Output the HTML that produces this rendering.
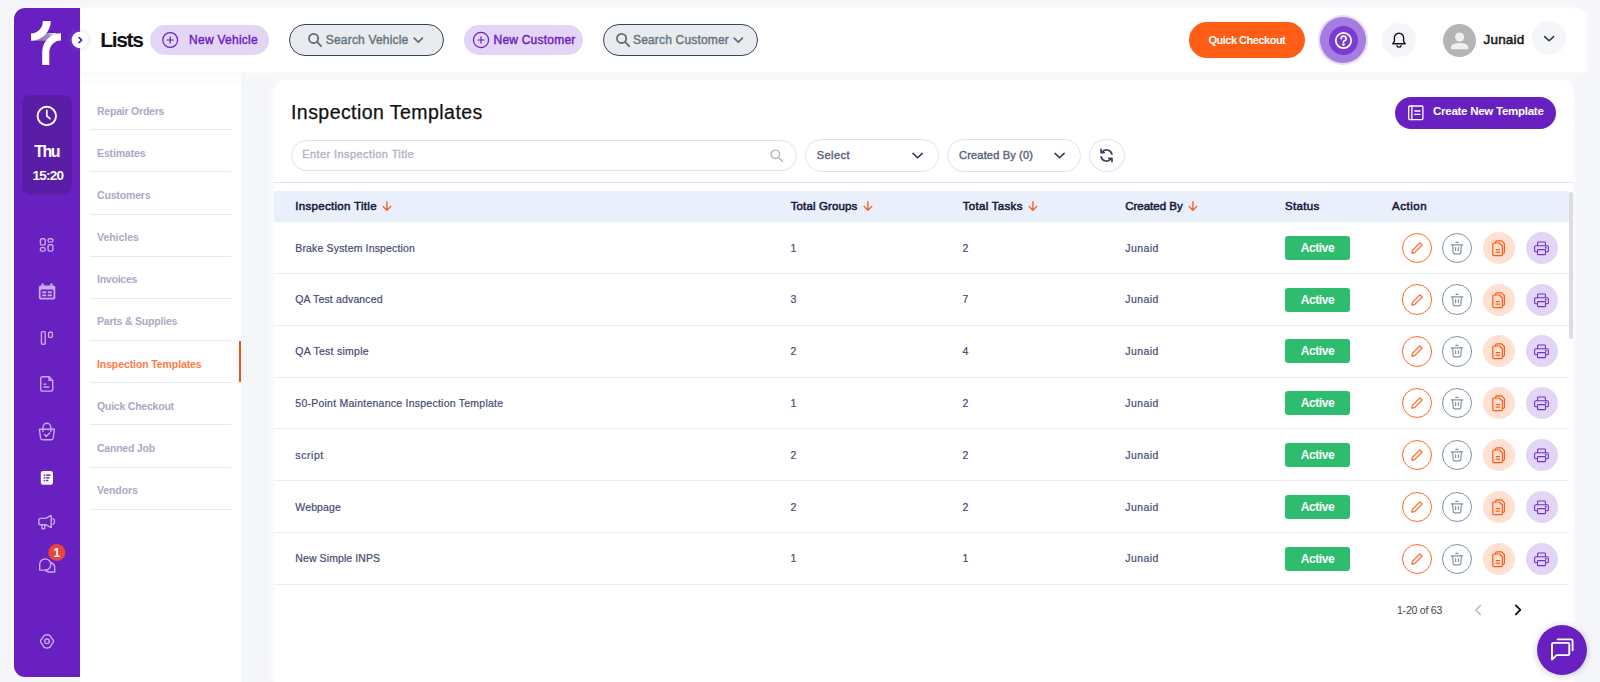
<!DOCTYPE html>
<html><head><meta charset="utf-8">
<style>
*{box-sizing:border-box;margin:0;padding:0}
html,body{width:1600px;height:682px;overflow:hidden;background:#f5f6fa;font-family:"Liberation Sans",sans-serif;}
.abs{position:absolute}
#side{position:absolute;left:14px;top:8px;width:66px;height:669px;background:#6920c1;border-radius:11px 0 0 11px;box-shadow:-1px 0 5px rgba(255,255,255,.8);}
#head{position:absolute;left:80px;top:8px;width:1506.5px;height:64px;background:#fff;border-radius:0 12px 0 0;box-shadow:0 0 8px rgba(255,255,255,.8);}
#nav{position:absolute;left:80px;top:72px;width:161px;height:610px;background:linear-gradient(#f8f9fc,#fff 13px);}
#card{position:absolute;left:274px;top:80px;width:1299px;height:610px;background:#fff;border-radius:12px;box-shadow:0 0 12px rgba(255,255,255,.9);}
.t{position:absolute;white-space:nowrap;line-height:1;}
.navi{position:absolute;left:97px;font-size:10.5px;font-weight:bold;color:#a8aac6;white-space:nowrap;line-height:12px}
.navl{position:absolute;left:90.3px;width:140.5px;height:1px;background:#e6e9f4}
.pill{position:absolute;border-radius:20px}
.hd{position:absolute;top:199.7px;font-size:11.5px;font-weight:normal;-webkit-text-stroke:0.5px #15163a;color:#15163a;white-space:nowrap;line-height:12px}
.cell{position:absolute;font-size:10.5px;color:#454a73;-webkit-text-stroke:0.2px #454a73;white-space:nowrap;line-height:12px}
.rowl{position:absolute;left:274px;width:1295px;height:1px;background:#ebedf3}
.badge{position:absolute;left:1285px;width:65px;height:24px;border-radius:3px;background:#2ebd6e;color:#fff;font-weight:bold;font-size:12px;text-align:center;line-height:25px}
.ic{position:absolute;border-radius:50%}
.md{font-weight:normal !important;-webkit-text-stroke:0.4px currentColor}
</style><style id="fit">
#thu{letter-spacing:-1.514px}
#time{letter-spacing:-0.733px}
#lists{letter-spacing:-1.354px}
#nv{letter-spacing:0.255px}
#sv{letter-spacing:0.188px}
#nc{letter-spacing:0.222px}
#sc{letter-spacing:0.173px}
#qc{letter-spacing:-0.488px}
#jn{letter-spacing:0.201px}
#ttl{letter-spacing:0.445px}
#cnt{letter-spacing:-0.259px}
#ph{letter-spacing:0.417px}
#sel{letter-spacing:0.444px}
#cb0{letter-spacing:0.175px}
#h0{letter-spacing:0.305px}
#h1{letter-spacing:0.127px}
#h2{letter-spacing:0.291px}
#h3{letter-spacing:-0.003px}
#h4{letter-spacing:0.338px}
#h5{letter-spacing:0.506px}
#r0a{letter-spacing:0.157px}
#r1a{letter-spacing:0.151px}
#r2a{letter-spacing:0.266px}
#r3a{letter-spacing:0.244px}
#r4a{letter-spacing:0.581px}
#r5a{letter-spacing:0.139px}
#r6a{letter-spacing:0.096px}
#pg{letter-spacing:-0.222px}
#n0{letter-spacing:-0.219px}
#n1{letter-spacing:-0.126px}
#n2{letter-spacing:-0.157px}
#n3{letter-spacing:-0.019px}
#n4{letter-spacing:-0.233px}
#n5{letter-spacing:-0.204px}
#n6{letter-spacing:-0.100px}
#n7{letter-spacing:-0.218px}
#n8{letter-spacing:-0.222px}
#n9{letter-spacing:-0.106px}
#r0j{letter-spacing:0.449px}
#b0{letter-spacing:-0.446px}
#r1j{letter-spacing:0.449px}
#b1{letter-spacing:-0.446px}
#r2j{letter-spacing:0.449px}
#b2{letter-spacing:-0.446px}
#r3j{letter-spacing:0.449px}
#b3{letter-spacing:-0.446px}
#r4j{letter-spacing:0.449px}
#b4{letter-spacing:-0.446px}
#r5j{letter-spacing:0.449px}
#b5{letter-spacing:-0.446px}
#r6j{letter-spacing:0.449px}
#b6{letter-spacing:-0.446px}
</style></head><body>
<div id="head"></div>
<div id="nav"></div>
<div id="card"></div>
<div id="side"></div>
<!--SIDE-->
<svg class="abs" style="left:14px;top:8px" width="80" height="669" viewBox="14 8 80 669" fill="none">
 <!-- logo -->
 <defs><linearGradient id="lg" x1="38" y1="41" x2="53" y2="33" gradientUnits="userSpaceOnUse"><stop offset="0" stop-color="#8e79b3"/><stop offset=".7" stop-color="#a08fc0"/><stop offset="1" stop-color="#efeaf6"/></linearGradient></defs>
 <path d="M33.8 40.8 L46.5 40.8 L57 32.9 L47 32.9 Z" fill="url(#lg)"/>
 <path d="M42.8 21 L50.8 21 A19.8 19.8 0 0 1 31 40.7 L31 33.3 A11.8 11.8 0 0 0 42.8 21 Z" fill="#fff"/>
 <path d="M61 33.2 L61 40.6 A11.7 11.7 0 0 0 49.3 52.3 L49.3 65 L42.2 65 L42.2 52 A18.8 18.8 0 0 1 61 33.2 Z" fill="#fff"/>
 
 <!-- clock box -->
 <rect x="22" y="95" width="50" height="99.5" rx="8" fill="#5a1ea6"/>
 <circle cx="46.8" cy="116" r="9.2" stroke="#fff" stroke-width="1.9"/>
 <path d="M46.8 110.3 V116 L50 118.6" stroke="#fff" stroke-width="1.7" stroke-linecap="round" stroke-linejoin="round"/>
 <g stroke="#c9aaf0" stroke-width="1.4" stroke-linejoin="round" stroke-linecap="round">
  <!-- grid -->
  <rect x="40.4" y="238.7" width="4.8" height="6.4" rx="1.3"/>
  <rect x="48.1" y="238.7" width="4.8" height="3.4" rx="1.3"/>
  <rect x="40.4" y="247.6" width="4.8" height="3.5" rx="1.3"/>
  <rect x="48.1" y="244.8" width="4.8" height="6.3" rx="1.3"/>
  <!-- kanban -->
  <rect x="41.4" y="331.6" width="3.8" height="12.6" rx="1"/>
  <rect x="48.6" y="332.2" width="3.8" height="5.2" rx="1"/>
  <!-- doc -->
  <path d="M42.6 376.7 H49 L52.7 380.4 V389.2 Q52.7 391.1 50.8 391.1 H42.6 Q40.7 391.1 40.7 389.2 V378.6 Q40.7 376.7 42.6 376.7 Z"/>
  <path d="M49 376.9 V380.4 H52.5" />
  <path d="M43.8 384.1 H46.2 M43.8 387 H48.8"/>
  <!-- bag -->
  <path d="M39.4 429.3 H54.4 L53.2 438 Q53 439.8 51.2 439.8 H42.6 Q40.8 439.8 40.6 438 Z"/>
  <path d="M43 431.5 V427.2 A3.9 3.9 0 0 1 50.8 427.2 V431.5"/>
  <path d="M44.5 434.6 L46.3 436.4 L49.6 433"/>
  <!-- megaphone -->
  <path d="M40.6 518.4 H45.6 L51.2 515.4 V527.6 L45.6 524.7 H40.6 Q38.8 524.7 38.8 522.9 V520.2 Q38.8 518.4 40.6 518.4 Z"/>
  <path d="M42 524.9 V528 Q42 528.8 42.8 528.8 H44 Q44.8 528.8 44.8 528 V524.9"/>
  <path d="M53 518.7 A3.4 3.4 0 0 1 53 524.4"/>
  <!-- chat -->
  <path d="M45.2 558.9 A5.6 5.6 0 0 1 50.8 564.5 A5.6 5.6 0 0 1 45.2 570.1 H39.7 V564.5 A5.6 5.6 0 0 1 45.2 558.9 Z"/>
  <path d="M51.6 562.8 A5 5 0 0 1 54.7 567.4 V572 H49.6 A5 5 0 0 1 45.4 570.3"/>
  <!-- gear -->
  <path d="M44.2 635.3 Q47 634.1 49.8 635.3 Q51.2 637.8 53.3 640.2 Q53.6 641.3 53.3 642.4 Q51.2 644.9 49.8 647.4 Q47 648.5 44.2 647.4 Q42.8 644.9 40.7 642.4 Q40.4 641.3 40.7 640.2 Q42.8 637.8 44.2 635.3 Z"/>
  <circle cx="47" cy="641.3" r="2.3"/>
 </g>
 <!-- calendar filled -->
 <path d="M41 285.4 H53.1 Q55.3 285.4 55.3 287.6 V297.4 Q55.3 299.6 53.1 299.6 H41 Q38.8 299.6 38.8 297.4 V287.6 Q38.8 285.4 41 285.4 Z" fill="#c9aaf0"/>
 <rect x="41.6" y="283.2" width="2" height="4" rx="1" fill="#c9aaf0"/>
 <rect x="50.5" y="283.2" width="2" height="4" rx="1" fill="#c9aaf0"/>
 <rect x="40.6" y="289.6" width="12.9" height="8.2" rx="1" fill="#6920c1"/>
 <rect x="42.3" y="291.3" width="4" height="1.9" fill="#c9aaf0"/><rect x="47.8" y="291.3" width="4" height="1.9" fill="#c9aaf0"/>
 <rect x="42.3" y="294.4" width="4" height="1.9" fill="#c9aaf0"/><rect x="47.8" y="294.4" width="4" height="1.9" fill="#c9aaf0"/>
 <!-- list filled -->
 <rect x="40.8" y="471" width="12.2" height="13.8" rx="2.2" fill="#fff"/>
 <g fill="#6920c1"><rect x="43.7" y="474.4" width="1.5" height="1.5"/><rect x="46.2" y="474.4" width="4.2" height="1.5"/>
 <rect x="43.7" y="477.1" width="1.5" height="1.5"/><rect x="46.2" y="477.1" width="3.2" height="1.5"/>
 <rect x="43.7" y="479.8" width="1.5" height="1.5"/><rect x="46.2" y="479.8" width="2.2" height="1.5"/></g>
 <!-- badge -->
 <circle cx="56.8" cy="552.6" r="8.5" fill="#e8453c"/>
 <!-- toggle -->
 <circle cx="79.8" cy="40" r="8.2" fill="#fff" style="filter:drop-shadow(0 0 3px rgba(160,160,190,.35))"/>
 <path d="M79 37.6 L81.7 40.1 L79 42.6" stroke="#6920c1" stroke-width="1.7" stroke-linecap="round" stroke-linejoin="round"/>
</svg>
<div class="t" id="thu" style="left:34.3px;top:143.8px;font-size:16px;font-weight:bold;color:#fff;">Thu</div>
<div class="t" id="time" style="left:32.5px;top:169px;font-size:13.5px;font-weight:bold;color:#fff;">15:20</div>
<div class="t" id="bdg" style="left:53.4px;top:546.5px;font-size:12px;font-weight:bold;color:#fff;">1</div>
<!--/SIDE-->
<!--HEAD-->
<div class="t" id="lists" style="left:100.3px;top:28.5px;font-size:21px;font-weight:bold;color:#111;">Lists</div>
<div class="pill" style="left:149.5px;top:25px;width:119.5px;height:30px;background:#e3d5f6"></div>
<svg class="abs" style="left:161px;top:31px" width="18" height="18" viewBox="0 0 18 18" fill="none" stroke="#6920c1" stroke-width="1.2" stroke-linecap="round"><circle cx="9.2" cy="9" r="7.4"/><path d="M9.2 5.9 V12.1 M6.1 9 H12.3"/></svg>
<div class="t md" id="nv" style="left:189.1px;top:33.5px;font-size:12px;font-weight:bold;color:#6920c1;">New Vehicle</div>

<div class="pill" style="left:289px;top:24px;width:155px;height:32px;background:#e9ecef;border:1px solid #3d405e"></div>
<svg class="abs" style="left:307px;top:32px" width="16" height="16" viewBox="0 0 16 16" fill="none" stroke="#5f6b76" stroke-width="1.8" stroke-linecap="round"><circle cx="6.6" cy="6.4" r="4.6"/><path d="M10.2 10.1 L14.2 14.2"/></svg>
<div class="t md" id="sv" style="left:325.8px;top:33.5px;font-size:12px;font-weight:bold;color:#66737f;">Search Vehicle</div>
<svg class="abs" style="left:412px;top:35px" width="12" height="10" viewBox="0 0 12 10" fill="none" stroke="#5f6b76" stroke-width="1.8" stroke-linecap="round" stroke-linejoin="round"><path d="M2.2 3.2 L6.3 7.2 L10.4 3.2"/></svg>

<div class="pill" style="left:463.5px;top:25px;width:119.5px;height:30px;background:#e3d5f6"></div>
<svg class="abs" style="left:472px;top:31px" width="18" height="18" viewBox="0 0 18 18" fill="none" stroke="#6920c1" stroke-width="1.2" stroke-linecap="round"><circle cx="9" cy="9" r="7.6"/><path d="M9 5.9 V12.1 M5.9 9 H12.1"/></svg>
<div class="t md" id="nc" style="left:493.5px;top:33.5px;font-size:12px;font-weight:bold;color:#6920c1;">New Customer</div>

<div class="pill" style="left:603px;top:24px;width:155px;height:32px;background:#e9ecef;border:1px solid #3d405e"></div>
<svg class="abs" style="left:615px;top:32px" width="16" height="16" viewBox="0 0 16 16" fill="none" stroke="#5f6b76" stroke-width="1.8" stroke-linecap="round"><circle cx="6.6" cy="6.4" r="4.6"/><path d="M10.2 10.1 L14.2 14.2"/></svg>
<div class="t md" id="sc" style="left:633px;top:33.5px;font-size:12px;font-weight:bold;color:#66737f;">Search Customer</div>
<svg class="abs" style="left:732px;top:35px" width="12" height="10" viewBox="0 0 12 10" fill="none" stroke="#5f6b76" stroke-width="1.8" stroke-linecap="round" stroke-linejoin="round"><path d="M2.2 3.2 L6.3 7.2 L10.4 3.2"/></svg>

<div class="pill" style="left:1188.5px;top:22px;width:116px;height:36px;background:#ff5c16"></div>
<div class="t" id="qc" style="left:1208.4px;top:34.5px;font-size:11px;font-weight:bold;color:#fff;">Quick Checkout</div>

<div class="ic" style="left:1320.3px;top:17px;width:46px;height:46px;background:#a67ce0;box-shadow:0 0 1px 2px rgba(166,124,224,.3)"></div>
<div class="ic" style="left:1328.8px;top:25.5px;width:29px;height:29px;background:#7a3bd0"></div>
<svg class="abs" style="left:1333.8px;top:30.6px" width="19" height="19" viewBox="0 0 19 19" fill="none" stroke="#fff" stroke-width="1.7" stroke-linecap="round"><circle cx="9.5" cy="9.5" r="7.7"/><path d="M7.2 7.6 A2.4 2.4 0 1 1 9.9 10 Q9.5 10.2 9.5 11.2"/><circle cx="9.5" cy="13.6" r=".5" fill="#fff"/></svg>

<div class="ic" style="left:1382.3px;top:23.3px;width:33.4px;height:33.4px;background:#f5f6fa"></div>
<svg class="abs" style="left:1390px;top:31px" width="18" height="18" viewBox="0 0 18 18" fill="none" stroke="#151515" stroke-width="1.4" stroke-linecap="round" stroke-linejoin="round"><path d="M9 2.2 A4.6 4.6 0 0 1 13.6 6.8 V10.3 L15.2 12.7 H2.8 L4.4 10.3 V6.8 A4.6 4.6 0 0 1 9 2.2 Z"/><path d="M7 14.7 A2.1 2.1 0 0 0 11 14.7"/></svg>

<div class="ic" style="left:1442.8px;top:23.5px;width:33px;height:33px;background:#b4b4b4;overflow:hidden">
 <svg width="33" height="33" viewBox="0 0 33 33"><circle cx="16.6" cy="13.1" r="4.6" fill="#efefef"/><path d="M8 25.3 V23.6 Q8 19.1 16.6 19.1 Q25.3 19.1 25.3 23.6 V25.3 Z" fill="#efefef"/></svg></div>
<div class="t" id="jn" style="left:1483.5px;top:33px;font-size:13.5px;font-weight:normal;-webkit-text-stroke:0.55px #1d1d1d;color:#1d1d1d;">Junaid</div>
<div class="ic" style="left:1532.2px;top:21px;width:34px;height:34px;background:#f5f6fa"></div>
<svg class="abs" style="left:1543px;top:33.7px" width="12" height="10" viewBox="0 0 12 10" fill="none" stroke="#27324a" stroke-width="1.5" stroke-linecap="round" stroke-linejoin="round"><path d="M1.6 2.6 L6.1 6.8 L10.6 2.6"/></svg>
<!--/HEAD-->
<!--NAV--><div class="navi" id="n0" style="top:104.60px;color:#a8aac6">Repair Orders</div>
<div class="navl" style="top:129.30px"></div>
<div class="navi" id="n1" style="top:146.75px;color:#a8aac6">Estimates</div>
<div class="navl" style="top:171.45px"></div>
<div class="navi" id="n2" style="top:188.90px;color:#a8aac6">Customers</div>
<div class="navl" style="top:213.60px"></div>
<div class="navi" id="n3" style="top:231.05px;color:#a8aac6">Vehicles</div>
<div class="navl" style="top:255.75px"></div>
<div class="navi" id="n4" style="top:273.20px;color:#a8aac6">Invoices</div>
<div class="navl" style="top:297.90px"></div>
<div class="navi" id="n5" style="top:315.35px;color:#a8aac6">Parts & Supplies</div>
<div class="navl" style="top:340.05px"></div>
<div class="navi" id="n6" style="top:357.50px;color:#ff7b45">Inspection Templates</div>
<div class="navl" style="top:382.20px"></div>
<div class="navi" id="n7" style="top:399.65px;color:#a8aac6">Quick Checkout</div>
<div class="navl" style="top:424.35px"></div>
<div class="navi" id="n8" style="top:441.80px;color:#a8aac6">Canned Job</div>
<div class="navl" style="top:466.50px"></div>
<div class="navi" id="n9" style="top:483.95px;color:#a8aac6">Vendors</div>
<div class="navl" style="top:508.65px"></div>
<div class="abs" style="left:239px;top:340.8px;width:2px;height:41.6px;background:#f4511e"></div>
<!--/NAV-->
<!--CARD-->
<div class="t" id="ttl" style="left:291px;top:103.2px;font-size:19.5px;color:#111;-webkit-text-stroke:0.25px #111;">Inspection Templates</div>
<div class="pill" style="left:1395px;top:97px;width:161.3px;height:31.5px;background:#6920c1"></div>
<svg class="abs" style="left:1407px;top:104px" width="18" height="18" viewBox="0 0 18 18" fill="none" stroke="#fff" stroke-width="1.3" stroke-linejoin="round" stroke-linecap="round"><rect x="1.7" y="2" width="14.2" height="13.6" rx="1"/><path d="M4.9 2 V15.6 M7.8 7 H13 M7.8 10.3 H13"/></svg>
<div class="t" id="cnt" style="left:1433px;top:106.2px;font-size:11.5px;font-weight:bold;color:#fff;">Create New Template</div>

<div class="pill" style="left:291px;top:139.5px;width:505.5px;height:31.5px;border:1px solid #d9e4f7;background:#fff"></div>
<div class="t md" id="ph" style="left:302.2px;top:149px;font-size:11px;font-weight:bold;color:#b3b6c6;">Enter Inspection Title</div>
<svg class="abs" style="left:769px;top:148px" width="16" height="16" viewBox="0 0 16 16" fill="none" stroke="#b5b5b8" stroke-width="1.4" stroke-linecap="round"><circle cx="6.3" cy="6.3" r="4.2"/><path d="M9.5 9.5 L13.6 13.6"/></svg>

<div class="pill" style="left:805.2px;top:139px;width:133.5px;height:33.3px;border:1px solid #d9e4f7;background:#fff"></div>
<div class="t md" id="sel" style="left:816.7px;top:149.5px;font-size:11px;font-weight:bold;color:#5a5f7d;">Select</div>
<svg class="abs" style="left:911px;top:150px" width="13" height="11" viewBox="0 0 13 11" fill="none" stroke="#2b3350" stroke-width="1.5" stroke-linecap="round" stroke-linejoin="round"><path d="M2 3.4 L6.6 7.8 L11.2 3.4"/></svg>

<div class="pill" style="left:947.2px;top:139px;width:133.5px;height:33.3px;border:1px solid #d9e4f7;background:#fff"></div>
<div class="t md" id="cb0" style="left:959.1px;top:149.5px;font-size:11px;font-weight:bold;color:#5a5f7d;">Created By (0)</div>
<svg class="abs" style="left:1053px;top:150px" width="13" height="11" viewBox="0 0 13 11" fill="none" stroke="#2b3350" stroke-width="1.5" stroke-linecap="round" stroke-linejoin="round"><path d="M2 3.4 L6.6 7.8 L11.2 3.4"/></svg>

<div class="ic" style="left:1089px;top:139px;width:35.6px;height:33.3px;border:1px solid #d9e4f7;background:#fff"></div>
<svg class="abs" style="left:1098.4px;top:146.9px" width="17" height="17" viewBox="0 0 17 17" fill="none" stroke="#3a4162" stroke-width="1.7" stroke-linecap="round" stroke-linejoin="round"><path d="M13.9 7.2 A5.6 5.6 0 0 0 3.9 5.2 M3 2.4 V5.6 H6.2"/><path d="M3.1 9.8 A5.6 5.6 0 0 0 13.1 11.8 M14 14.6 V11.4 H10.8"/></svg>

<div class="abs" style="left:274px;top:182.3px;width:1299px;height:1px;background:#dbe6f6"></div>
<div class="abs" style="left:274px;top:191px;width:1295px;height:31px;background:#e9f0fc"></div>
<div class="abs" style="left:1569px;top:192.3px;width:4px;height:146.5px;background:#dddddd;border-radius:2px"></div>
<div class="hd" id="h0" style="left:295.3px">Inspection Title</div>
<svg class="abs" style="left:381px;top:200.3px" width="12" height="12" viewBox="0 0 12 12" fill="none" stroke="#ff5a10" stroke-width="1.3" stroke-linecap="round" stroke-linejoin="round"><path d="M5.9 1.6 V10.2 M2 6.4 L5.9 10.3 L9.8 6.4"/></svg>
<div class="hd" id="h1" style="left:790.7px">Total Groups</div>
<svg class="abs" style="left:862.3px;top:200.3px" width="12" height="12" viewBox="0 0 12 12" fill="none" stroke="#ff5a10" stroke-width="1.3" stroke-linecap="round" stroke-linejoin="round"><path d="M5.9 1.6 V10.2 M2 6.4 L5.9 10.3 L9.8 6.4"/></svg>
<div class="hd" id="h2" style="left:962.8px">Total Tasks</div>
<svg class="abs" style="left:1026.8px;top:200.3px" width="12" height="12" viewBox="0 0 12 12" fill="none" stroke="#ff5a10" stroke-width="1.3" stroke-linecap="round" stroke-linejoin="round"><path d="M5.9 1.6 V10.2 M2 6.4 L5.9 10.3 L9.8 6.4"/></svg>
<div class="hd" id="h3" style="left:1125.2px">Created By</div>
<svg class="abs" style="left:1187.2px;top:200.3px" width="12" height="12" viewBox="0 0 12 12" fill="none" stroke="#ff5a10" stroke-width="1.3" stroke-linecap="round" stroke-linejoin="round"><path d="M5.9 1.6 V10.2 M2 6.4 L5.9 10.3 L9.8 6.4"/></svg>
<div class="hd" id="h4" style="left:1285px">Status</div>
<div class="hd" id="h5" style="left:1392.1px">Action</div>
<div class="cell" id="r0a" style="left:295.3px;top:242px">Brake System Inspection</div><div class="cell" style="left:790.5px;top:242px">1</div><div class="cell" style="left:962.5px;top:242px">2</div><div class="cell" id="r0j" style="left:1125.2px;top:242px">Junaid</div><div class="badge" style="top:235.7px"><span id="b0">Active</span></div>
<div class="ic" style="left:1401.8px;top:232.5px;width:30.4px;height:30.4px;border:1px solid #ff6a2b"></div><div class="ic" style="left:1442px;top:232.5px;width:30.4px;height:30.4px;border:1px solid #8492a6"></div><div class="ic" style="left:1482.8px;top:231.7px;width:32px;height:32px;background:#ffe0d3"></div><div class="ic" style="left:1525.6px;top:231.7px;width:32px;height:32px;background:#e2d5f5"></div>
<svg class="abs" style="left:1409px;top:239.7px" width="16" height="16" viewBox="0 0 16 16" fill="none" stroke="#ff5a10" stroke-width="1.1" stroke-linejoin="round"><path d="M10.9 2.9 L13.1 5.1 L5.6 12.6 L2.9 13.1 L3.4 10.4 Z"/></svg><svg class="abs" style="left:1449px;top:239.7px" width="16" height="16" viewBox="0 0 16 16" fill="none" stroke="#8492a6" stroke-width="1.2" stroke-linecap="round" stroke-linejoin="round"><path d="M2.2 4.9 H13.8 M6.8 2.3 H9.2 M3.6 5 L4.2 12.4 Q4.3 13.8 5.7 13.8 H10.3 Q11.7 13.8 11.8 12.4 L12.4 5 M6.6 7.6 V10.6 M9.4 7.6 V10.6"/></svg><svg class="abs" style="left:1490px;top:238.7px" width="18" height="18" viewBox="0 0 18 18" fill="none" stroke="#ff5a10" stroke-width="1.2" stroke-linecap="round" stroke-linejoin="round"><path d="M5.6 3.8 V3 Q5.6 1.8 6.8 1.8 H11.6 L14.4 4.6 V13.2 Q14.4 14.4 13.2 14.4 H12.6"/><path d="M4 4 H9.4 L12.4 7 V15.4 Q12.4 16.6 11.2 16.6 H4 Q2.8 16.6 2.8 15.4 V5.2 Q2.8 4 4 4 Z"/><path d="M6.2 10.6 H9.6 M6.2 13.2 H9.6"/></svg><svg class="abs" style="left:1533px;top:239.7px" width="17" height="17" viewBox="0 0 17 17" fill="none" stroke="#6f33c8" stroke-width="1.1" stroke-linecap="round" stroke-linejoin="round"><path d="M4.6 5.6 V2.7 Q4.6 2 5.3 2 H11.7 Q12.4 2 12.4 2.7 V5.6"/><path d="M4.4 11.8 H2.9 Q1.6 11.8 1.6 10.5 V7 Q1.6 5.7 2.9 5.7 H14.1 Q15.4 5.7 15.4 7 V10.5 Q15.4 11.8 14.1 11.8 H12.6"/><rect x="4.5" y="9.6" width="8" height="5" rx=".6"/><circle cx="12.8" cy="7.8" r=".4" fill="#6b2cc4"/></svg>
<div class="rowl" style="top:272.80px"></div>
<div class="cell" id="r1a" style="left:295.3px;top:293px">QA Test advanced</div><div class="cell" style="left:790.5px;top:293px">3</div><div class="cell" style="left:962.5px;top:293px">7</div><div class="cell" id="r1j" style="left:1125.2px;top:293px">Junaid</div><div class="badge" style="top:287.6px"><span id="b1">Active</span></div>
<div class="ic" style="left:1401.8px;top:284.4px;width:30.4px;height:30.4px;border:1px solid #ff6a2b"></div><div class="ic" style="left:1442px;top:284.4px;width:30.4px;height:30.4px;border:1px solid #8492a6"></div><div class="ic" style="left:1482.8px;top:283.6px;width:32px;height:32px;background:#ffe0d3"></div><div class="ic" style="left:1525.6px;top:283.6px;width:32px;height:32px;background:#e2d5f5"></div>
<svg class="abs" style="left:1409px;top:291.6px" width="16" height="16" viewBox="0 0 16 16" fill="none" stroke="#ff5a10" stroke-width="1.1" stroke-linejoin="round"><path d="M10.9 2.9 L13.1 5.1 L5.6 12.6 L2.9 13.1 L3.4 10.4 Z"/></svg><svg class="abs" style="left:1449px;top:291.6px" width="16" height="16" viewBox="0 0 16 16" fill="none" stroke="#8492a6" stroke-width="1.2" stroke-linecap="round" stroke-linejoin="round"><path d="M2.2 4.9 H13.8 M6.8 2.3 H9.2 M3.6 5 L4.2 12.4 Q4.3 13.8 5.7 13.8 H10.3 Q11.7 13.8 11.8 12.4 L12.4 5 M6.6 7.6 V10.6 M9.4 7.6 V10.6"/></svg><svg class="abs" style="left:1490px;top:290.6px" width="18" height="18" viewBox="0 0 18 18" fill="none" stroke="#ff5a10" stroke-width="1.2" stroke-linecap="round" stroke-linejoin="round"><path d="M5.6 3.8 V3 Q5.6 1.8 6.8 1.8 H11.6 L14.4 4.6 V13.2 Q14.4 14.4 13.2 14.4 H12.6"/><path d="M4 4 H9.4 L12.4 7 V15.4 Q12.4 16.6 11.2 16.6 H4 Q2.8 16.6 2.8 15.4 V5.2 Q2.8 4 4 4 Z"/><path d="M6.2 10.6 H9.6 M6.2 13.2 H9.6"/></svg><svg class="abs" style="left:1533px;top:291.6px" width="17" height="17" viewBox="0 0 17 17" fill="none" stroke="#6f33c8" stroke-width="1.1" stroke-linecap="round" stroke-linejoin="round"><path d="M4.6 5.6 V2.7 Q4.6 2 5.3 2 H11.7 Q12.4 2 12.4 2.7 V5.6"/><path d="M4.4 11.8 H2.9 Q1.6 11.8 1.6 10.5 V7 Q1.6 5.7 2.9 5.7 H14.1 Q15.4 5.7 15.4 7 V10.5 Q15.4 11.8 14.1 11.8 H12.6"/><rect x="4.5" y="9.6" width="8" height="5" rx=".6"/><circle cx="12.8" cy="7.8" r=".4" fill="#6b2cc4"/></svg>
<div class="rowl" style="top:324.66px"></div>
<div class="cell" id="r2a" style="left:295.3px;top:345px">QA Test simple</div><div class="cell" style="left:790.5px;top:345px">2</div><div class="cell" style="left:962.5px;top:345px">4</div><div class="cell" id="r2j" style="left:1125.2px;top:345px">Junaid</div><div class="badge" style="top:339.4px"><span id="b2">Active</span></div>
<div class="ic" style="left:1401.8px;top:336.2px;width:30.4px;height:30.4px;border:1px solid #ff6a2b"></div><div class="ic" style="left:1442px;top:336.2px;width:30.4px;height:30.4px;border:1px solid #8492a6"></div><div class="ic" style="left:1482.8px;top:335.4px;width:32px;height:32px;background:#ffe0d3"></div><div class="ic" style="left:1525.6px;top:335.4px;width:32px;height:32px;background:#e2d5f5"></div>
<svg class="abs" style="left:1409px;top:343.4px" width="16" height="16" viewBox="0 0 16 16" fill="none" stroke="#ff5a10" stroke-width="1.1" stroke-linejoin="round"><path d="M10.9 2.9 L13.1 5.1 L5.6 12.6 L2.9 13.1 L3.4 10.4 Z"/></svg><svg class="abs" style="left:1449px;top:343.4px" width="16" height="16" viewBox="0 0 16 16" fill="none" stroke="#8492a6" stroke-width="1.2" stroke-linecap="round" stroke-linejoin="round"><path d="M2.2 4.9 H13.8 M6.8 2.3 H9.2 M3.6 5 L4.2 12.4 Q4.3 13.8 5.7 13.8 H10.3 Q11.7 13.8 11.8 12.4 L12.4 5 M6.6 7.6 V10.6 M9.4 7.6 V10.6"/></svg><svg class="abs" style="left:1490px;top:342.4px" width="18" height="18" viewBox="0 0 18 18" fill="none" stroke="#ff5a10" stroke-width="1.2" stroke-linecap="round" stroke-linejoin="round"><path d="M5.6 3.8 V3 Q5.6 1.8 6.8 1.8 H11.6 L14.4 4.6 V13.2 Q14.4 14.4 13.2 14.4 H12.6"/><path d="M4 4 H9.4 L12.4 7 V15.4 Q12.4 16.6 11.2 16.6 H4 Q2.8 16.6 2.8 15.4 V5.2 Q2.8 4 4 4 Z"/><path d="M6.2 10.6 H9.6 M6.2 13.2 H9.6"/></svg><svg class="abs" style="left:1533px;top:343.4px" width="17" height="17" viewBox="0 0 17 17" fill="none" stroke="#6f33c8" stroke-width="1.1" stroke-linecap="round" stroke-linejoin="round"><path d="M4.6 5.6 V2.7 Q4.6 2 5.3 2 H11.7 Q12.4 2 12.4 2.7 V5.6"/><path d="M4.4 11.8 H2.9 Q1.6 11.8 1.6 10.5 V7 Q1.6 5.7 2.9 5.7 H14.1 Q15.4 5.7 15.4 7 V10.5 Q15.4 11.8 14.1 11.8 H12.6"/><rect x="4.5" y="9.6" width="8" height="5" rx=".6"/><circle cx="12.8" cy="7.8" r=".4" fill="#6b2cc4"/></svg>
<div class="rowl" style="top:376.52px"></div>
<div class="cell" id="r3a" style="left:295.3px;top:397px">50-Point Maintenance Inspection Template</div><div class="cell" style="left:790.5px;top:397px">1</div><div class="cell" style="left:962.5px;top:397px">2</div><div class="cell" id="r3j" style="left:1125.2px;top:397px">Junaid</div><div class="badge" style="top:391.2px"><span id="b3">Active</span></div>
<div class="ic" style="left:1401.8px;top:388.1px;width:30.4px;height:30.4px;border:1px solid #ff6a2b"></div><div class="ic" style="left:1442px;top:388.1px;width:30.4px;height:30.4px;border:1px solid #8492a6"></div><div class="ic" style="left:1482.8px;top:387.2px;width:32px;height:32px;background:#ffe0d3"></div><div class="ic" style="left:1525.6px;top:387.2px;width:32px;height:32px;background:#e2d5f5"></div>
<svg class="abs" style="left:1409px;top:395.2px" width="16" height="16" viewBox="0 0 16 16" fill="none" stroke="#ff5a10" stroke-width="1.1" stroke-linejoin="round"><path d="M10.9 2.9 L13.1 5.1 L5.6 12.6 L2.9 13.1 L3.4 10.4 Z"/></svg><svg class="abs" style="left:1449px;top:395.2px" width="16" height="16" viewBox="0 0 16 16" fill="none" stroke="#8492a6" stroke-width="1.2" stroke-linecap="round" stroke-linejoin="round"><path d="M2.2 4.9 H13.8 M6.8 2.3 H9.2 M3.6 5 L4.2 12.4 Q4.3 13.8 5.7 13.8 H10.3 Q11.7 13.8 11.8 12.4 L12.4 5 M6.6 7.6 V10.6 M9.4 7.6 V10.6"/></svg><svg class="abs" style="left:1490px;top:394.2px" width="18" height="18" viewBox="0 0 18 18" fill="none" stroke="#ff5a10" stroke-width="1.2" stroke-linecap="round" stroke-linejoin="round"><path d="M5.6 3.8 V3 Q5.6 1.8 6.8 1.8 H11.6 L14.4 4.6 V13.2 Q14.4 14.4 13.2 14.4 H12.6"/><path d="M4 4 H9.4 L12.4 7 V15.4 Q12.4 16.6 11.2 16.6 H4 Q2.8 16.6 2.8 15.4 V5.2 Q2.8 4 4 4 Z"/><path d="M6.2 10.6 H9.6 M6.2 13.2 H9.6"/></svg><svg class="abs" style="left:1533px;top:395.3px" width="17" height="17" viewBox="0 0 17 17" fill="none" stroke="#6f33c8" stroke-width="1.1" stroke-linecap="round" stroke-linejoin="round"><path d="M4.6 5.6 V2.7 Q4.6 2 5.3 2 H11.7 Q12.4 2 12.4 2.7 V5.6"/><path d="M4.4 11.8 H2.9 Q1.6 11.8 1.6 10.5 V7 Q1.6 5.7 2.9 5.7 H14.1 Q15.4 5.7 15.4 7 V10.5 Q15.4 11.8 14.1 11.8 H12.6"/><rect x="4.5" y="9.6" width="8" height="5" rx=".6"/><circle cx="12.8" cy="7.8" r=".4" fill="#6b2cc4"/></svg>
<div class="rowl" style="top:428.38px"></div>
<div class="cell" id="r4a" style="left:295.3px;top:449px">script</div><div class="cell" style="left:790.5px;top:449px">2</div><div class="cell" style="left:962.5px;top:449px">2</div><div class="cell" id="r4j" style="left:1125.2px;top:449px">Junaid</div><div class="badge" style="top:443.1px"><span id="b4">Active</span></div>
<div class="ic" style="left:1401.8px;top:439.9px;width:30.4px;height:30.4px;border:1px solid #ff6a2b"></div><div class="ic" style="left:1442px;top:439.9px;width:30.4px;height:30.4px;border:1px solid #8492a6"></div><div class="ic" style="left:1482.8px;top:439.1px;width:32px;height:32px;background:#ffe0d3"></div><div class="ic" style="left:1525.6px;top:439.1px;width:32px;height:32px;background:#e2d5f5"></div>
<svg class="abs" style="left:1409px;top:447.1px" width="16" height="16" viewBox="0 0 16 16" fill="none" stroke="#ff5a10" stroke-width="1.1" stroke-linejoin="round"><path d="M10.9 2.9 L13.1 5.1 L5.6 12.6 L2.9 13.1 L3.4 10.4 Z"/></svg><svg class="abs" style="left:1449px;top:447.1px" width="16" height="16" viewBox="0 0 16 16" fill="none" stroke="#8492a6" stroke-width="1.2" stroke-linecap="round" stroke-linejoin="round"><path d="M2.2 4.9 H13.8 M6.8 2.3 H9.2 M3.6 5 L4.2 12.4 Q4.3 13.8 5.7 13.8 H10.3 Q11.7 13.8 11.8 12.4 L12.4 5 M6.6 7.6 V10.6 M9.4 7.6 V10.6"/></svg><svg class="abs" style="left:1490px;top:446.1px" width="18" height="18" viewBox="0 0 18 18" fill="none" stroke="#ff5a10" stroke-width="1.2" stroke-linecap="round" stroke-linejoin="round"><path d="M5.6 3.8 V3 Q5.6 1.8 6.8 1.8 H11.6 L14.4 4.6 V13.2 Q14.4 14.4 13.2 14.4 H12.6"/><path d="M4 4 H9.4 L12.4 7 V15.4 Q12.4 16.6 11.2 16.6 H4 Q2.8 16.6 2.8 15.4 V5.2 Q2.8 4 4 4 Z"/><path d="M6.2 10.6 H9.6 M6.2 13.2 H9.6"/></svg><svg class="abs" style="left:1533px;top:447.1px" width="17" height="17" viewBox="0 0 17 17" fill="none" stroke="#6f33c8" stroke-width="1.1" stroke-linecap="round" stroke-linejoin="round"><path d="M4.6 5.6 V2.7 Q4.6 2 5.3 2 H11.7 Q12.4 2 12.4 2.7 V5.6"/><path d="M4.4 11.8 H2.9 Q1.6 11.8 1.6 10.5 V7 Q1.6 5.7 2.9 5.7 H14.1 Q15.4 5.7 15.4 7 V10.5 Q15.4 11.8 14.1 11.8 H12.6"/><rect x="4.5" y="9.6" width="8" height="5" rx=".6"/><circle cx="12.8" cy="7.8" r=".4" fill="#6b2cc4"/></svg>
<div class="rowl" style="top:480.24px"></div>
<div class="cell" id="r5a" style="left:295.3px;top:501px">Webpage</div><div class="cell" style="left:790.5px;top:501px">2</div><div class="cell" style="left:962.5px;top:501px">2</div><div class="cell" id="r5j" style="left:1125.2px;top:501px">Junaid</div><div class="badge" style="top:494.9px"><span id="b5">Active</span></div>
<div class="ic" style="left:1401.8px;top:491.8px;width:30.4px;height:30.4px;border:1px solid #ff6a2b"></div><div class="ic" style="left:1442px;top:491.8px;width:30.4px;height:30.4px;border:1px solid #8492a6"></div><div class="ic" style="left:1482.8px;top:490.9px;width:32px;height:32px;background:#ffe0d3"></div><div class="ic" style="left:1525.6px;top:490.9px;width:32px;height:32px;background:#e2d5f5"></div>
<svg class="abs" style="left:1409px;top:498.9px" width="16" height="16" viewBox="0 0 16 16" fill="none" stroke="#ff5a10" stroke-width="1.1" stroke-linejoin="round"><path d="M10.9 2.9 L13.1 5.1 L5.6 12.6 L2.9 13.1 L3.4 10.4 Z"/></svg><svg class="abs" style="left:1449px;top:498.9px" width="16" height="16" viewBox="0 0 16 16" fill="none" stroke="#8492a6" stroke-width="1.2" stroke-linecap="round" stroke-linejoin="round"><path d="M2.2 4.9 H13.8 M6.8 2.3 H9.2 M3.6 5 L4.2 12.4 Q4.3 13.8 5.7 13.8 H10.3 Q11.7 13.8 11.8 12.4 L12.4 5 M6.6 7.6 V10.6 M9.4 7.6 V10.6"/></svg><svg class="abs" style="left:1490px;top:497.9px" width="18" height="18" viewBox="0 0 18 18" fill="none" stroke="#ff5a10" stroke-width="1.2" stroke-linecap="round" stroke-linejoin="round"><path d="M5.6 3.8 V3 Q5.6 1.8 6.8 1.8 H11.6 L14.4 4.6 V13.2 Q14.4 14.4 13.2 14.4 H12.6"/><path d="M4 4 H9.4 L12.4 7 V15.4 Q12.4 16.6 11.2 16.6 H4 Q2.8 16.6 2.8 15.4 V5.2 Q2.8 4 4 4 Z"/><path d="M6.2 10.6 H9.6 M6.2 13.2 H9.6"/></svg><svg class="abs" style="left:1533px;top:498.9px" width="17" height="17" viewBox="0 0 17 17" fill="none" stroke="#6f33c8" stroke-width="1.1" stroke-linecap="round" stroke-linejoin="round"><path d="M4.6 5.6 V2.7 Q4.6 2 5.3 2 H11.7 Q12.4 2 12.4 2.7 V5.6"/><path d="M4.4 11.8 H2.9 Q1.6 11.8 1.6 10.5 V7 Q1.6 5.7 2.9 5.7 H14.1 Q15.4 5.7 15.4 7 V10.5 Q15.4 11.8 14.1 11.8 H12.6"/><rect x="4.5" y="9.6" width="8" height="5" rx=".6"/><circle cx="12.8" cy="7.8" r=".4" fill="#6b2cc4"/></svg>
<div class="rowl" style="top:532.10px"></div>
<div class="cell" id="r6a" style="left:295.3px;top:552px">New Simple INPS</div><div class="cell" style="left:790.5px;top:552px">1</div><div class="cell" style="left:962.5px;top:552px">1</div><div class="cell" id="r6j" style="left:1125.2px;top:552px">Junaid</div><div class="badge" style="top:546.8px"><span id="b6">Active</span></div>
<div class="ic" style="left:1401.8px;top:543.6px;width:30.4px;height:30.4px;border:1px solid #ff6a2b"></div><div class="ic" style="left:1442px;top:543.6px;width:30.4px;height:30.4px;border:1px solid #8492a6"></div><div class="ic" style="left:1482.8px;top:542.8px;width:32px;height:32px;background:#ffe0d3"></div><div class="ic" style="left:1525.6px;top:542.8px;width:32px;height:32px;background:#e2d5f5"></div>
<svg class="abs" style="left:1409px;top:550.8px" width="16" height="16" viewBox="0 0 16 16" fill="none" stroke="#ff5a10" stroke-width="1.1" stroke-linejoin="round"><path d="M10.9 2.9 L13.1 5.1 L5.6 12.6 L2.9 13.1 L3.4 10.4 Z"/></svg><svg class="abs" style="left:1449px;top:550.8px" width="16" height="16" viewBox="0 0 16 16" fill="none" stroke="#8492a6" stroke-width="1.2" stroke-linecap="round" stroke-linejoin="round"><path d="M2.2 4.9 H13.8 M6.8 2.3 H9.2 M3.6 5 L4.2 12.4 Q4.3 13.8 5.7 13.8 H10.3 Q11.7 13.8 11.8 12.4 L12.4 5 M6.6 7.6 V10.6 M9.4 7.6 V10.6"/></svg><svg class="abs" style="left:1490px;top:549.8px" width="18" height="18" viewBox="0 0 18 18" fill="none" stroke="#ff5a10" stroke-width="1.2" stroke-linecap="round" stroke-linejoin="round"><path d="M5.6 3.8 V3 Q5.6 1.8 6.8 1.8 H11.6 L14.4 4.6 V13.2 Q14.4 14.4 13.2 14.4 H12.6"/><path d="M4 4 H9.4 L12.4 7 V15.4 Q12.4 16.6 11.2 16.6 H4 Q2.8 16.6 2.8 15.4 V5.2 Q2.8 4 4 4 Z"/><path d="M6.2 10.6 H9.6 M6.2 13.2 H9.6"/></svg><svg class="abs" style="left:1533px;top:550.8px" width="17" height="17" viewBox="0 0 17 17" fill="none" stroke="#6f33c8" stroke-width="1.1" stroke-linecap="round" stroke-linejoin="round"><path d="M4.6 5.6 V2.7 Q4.6 2 5.3 2 H11.7 Q12.4 2 12.4 2.7 V5.6"/><path d="M4.4 11.8 H2.9 Q1.6 11.8 1.6 10.5 V7 Q1.6 5.7 2.9 5.7 H14.1 Q15.4 5.7 15.4 7 V10.5 Q15.4 11.8 14.1 11.8 H12.6"/><rect x="4.5" y="9.6" width="8" height="5" rx=".6"/><circle cx="12.8" cy="7.8" r=".4" fill="#6b2cc4"/></svg>
<div class="rowl" style="top:583.96px"></div>

<div class="t" id="pg" style="left:1397px;top:604.5px;font-size:10.5px;color:#444;">1-20 of 63</div>
<svg class="abs" style="left:1472px;top:603px" width="12" height="14" viewBox="0 0 12 14" fill="none" stroke="#b9b9b9" stroke-width="1.5" stroke-linecap="round" stroke-linejoin="round"><path d="M8.3 2.4 L3.9 6.9 L8.3 11.4"/></svg>
<svg class="abs" style="left:1512px;top:603px" width="12" height="14" viewBox="0 0 12 14" fill="none" stroke="#151515" stroke-width="1.9" stroke-linecap="round" stroke-linejoin="round"><path d="M3.9 2.4 L8.3 6.9 L3.9 11.4"/></svg>
<div class="ic" style="left:1537.2px;top:625.1px;width:50px;height:50px;background:#6920c1;box-shadow:0 1px 7px rgba(60,60,90,.28)"></div>
<svg class="abs" style="left:1549px;top:637px" width="27" height="27" viewBox="0 0 27 27" fill="none" stroke="#fff" stroke-width="1.9" stroke-linejoin="round" stroke-linecap="round"><path d="M8.6 2.4 H22.1 Q23.6 2.4 23.6 3.9 V13.2"/><path d="M4.4 5.9 H18.9 Q20.3 5.9 20.3 7.3 V16.7 Q20.3 18.1 18.9 18.1 H7.6 L3 22.6 V7.3 Q3 5.9 4.4 5.9 Z"/></svg>
<!--/CARD-->
</body></html>
